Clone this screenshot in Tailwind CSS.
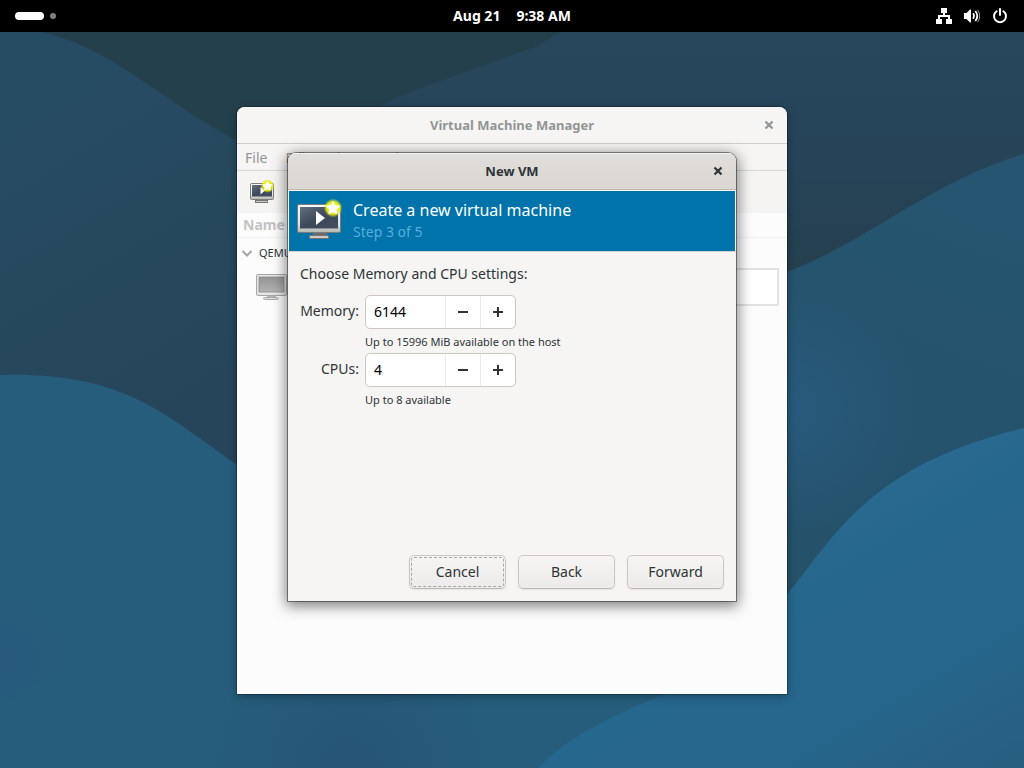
<!DOCTYPE html>
<html lang="en">
<head>
<meta charset="utf-8">
<meta name="viewport" content="width=device-width, initial-scale=1">
<title>Virtual Machine Manager</title>
<script src="https://cdn.jsdelivr.net/npm/@tailwindcss/browser@4"></script>
</head>
<body class="flex min-h-screen flex-col bg-[#26465a] font-['Noto_Sans','Open_Sans',sans-serif] text-sm text-[#2e3436]">

<svg class="absolute" width="0" height="0" aria-hidden="true">
  <defs>
    <linearGradient id="frame" x1="0" y1="0" x2="0" y2="1"><stop offset="0" stop-color="#fafafa"/><stop offset="0.7" stop-color="#e4e4e2"/><stop offset="1" stop-color="#b4b4b0"/></linearGradient>
    <linearGradient id="screen" x1="0" y1="0" x2="1" y2="1"><stop offset="0" stop-color="#63707f"/><stop offset="0.5" stop-color="#3d4959"/><stop offset="1" stop-color="#414d61"/></linearGradient>
    <linearGradient id="grayscreen" x1="0" y1="0" x2="0" y2="1"><stop offset="0" stop-color="#949494"/><stop offset="1" stop-color="#b2b2b2"/></linearGradient>
    <radialGradient id="glow"><stop offset="0" stop-color="#f6f900"/><stop offset="0.65" stop-color="#e8ee10"/><stop offset="1" stop-color="#d8e020" stop-opacity="0"/></radialGradient>
    <symbol id="vm-new" viewBox="0 0 48 42">
      <path d="M17 34h14v4H17z" fill="#6b6b69"/>
      <rect x="13.500" y="36.500" width="19" height="3" rx="0.5" fill="#c9c9c6" stroke="#777"/>
      <rect x="1.500" y="5.500" width="43" height="28" rx="1.500" fill="url(#frame)" stroke="#7c7d7a"/>
      <rect x="4" y="8" width="38" height="21.500" fill="url(#screen)"/>
      <path d="M20 12v14l9-7z" fill="#fff"/>
      <circle cx="37" cy="9" r="9.500" fill="url(#glow)"/>
      <path d="M37 2.500l2 4 4.500.7-3.200 3.100.8 4.500-4.100-2.100-4.100 2.100.8-4.500-3.200-3.100 4.500-.7z" fill="#fff" stroke="#fff" stroke-linejoin="round"/>
    </symbol>
    <symbol id="vm-new-small" viewBox="0 0 24 24">
      <rect x="5.500" y="20.500" width="12" height="2" fill="#c9c9c6" stroke="#777"/>
      <rect x="0.500" y="3.500" width="23" height="16" rx="1" fill="url(#frame)" stroke="#7c7d7a"/>
      <rect x="2" y="5" width="20" height="11.500" fill="url(#screen)"/>
      <path d="M10.500 7v7.500l4.500-4z" fill="#fff"/>
      <circle cx="17.500" cy="6" r="7" fill="url(#glow)"/>
      <path d="M17.500 1.500l1.500 2.800 3.100.5-2.200 2.200.5 3.100-2.900-1.400-2.900 1.400.5-3.100-2.200-2.200 3.100-.5z" fill="#fff" stroke="#fff" stroke-width="0.800" stroke-linejoin="round"/>
    </symbol>
  </defs>
</svg>

<header class="grid h-8 grid-cols-3 items-center bg-black px-4 text-white">
  <button type="button" aria-label="Activities" class="flex items-center gap-1.5 justify-self-start">
    <span class="-ml-px h-2 w-[29px] rounded-full bg-white"></span>
    <span class="size-1.5 rounded-full bg-[#808080]"></span>
  </button>
  <button type="button" class="flex gap-4 justify-self-center font-bold whitespace-nowrap"><span>Aug 21</span><span>9:38 AM</span></button>
  <button type="button" aria-label="System menu" class="flex items-center gap-3 justify-self-end">
    <svg class="size-4" viewBox="0 0 16 16" fill="#fff"><path d="M5.500 0h5a.5.500 0 0 1 .5.500v4a.5.500 0 0 1-.5.500H9v2h5v4h1.500a.5.500 0 0 1 .5.500v4a.5.500 0 0 1-.5.500h-5a.5.500 0 0 1-.5-.5v-4a.5.500 0 0 1 .5-.5H12V9H4v2h1.500a.5.500 0 0 1 .5.500v4a.5.500 0 0 1-.5.500h-5a.5.500 0 0 1-.5-.5v-4a.5.500 0 0 1 .5-.5H2V7h5V5H5.500a.5.500 0 0 1-.5-.5v-4a.5.500 0 0 1 .5-.5z"/></svg>
    <svg class="size-4" viewBox="0 0 16 16"><path d="M0 5h2.500L6 1.500h1v13H6L2.500 11H0z" fill="#fff"/><path d="M9 5.300q2 2.700 0 5.400M11.300 3q4 5 0 10" fill="none" stroke="#fff" stroke-width="1.800"/><path d="M13.500 1.800q4.500 6.200 0 12.400" fill="none" stroke="#aaa" stroke-width="0.900"/></svg>
    <svg class="size-4" viewBox="0 0 16 16" fill="none" stroke="#fff" stroke-width="2" stroke-linecap="round"><path d="M8 1v6M4.600 3.200a6 6 0 1 0 6.800 0"/></svg>
  </button>
</header>

<main class="relative flex-1 overflow-hidden">
  <svg class="absolute inset-0 size-full" viewBox="0 32 1024 736" preserveAspectRatio="none" aria-hidden="true">
    <defs>
      <linearGradient id="b1" x1="0" y1="0" x2="0" y2="1"><stop offset="0" stop-color="#27475d"/><stop offset="0.25" stop-color="#264357"/><stop offset="0.45" stop-color="#253f4c"/></linearGradient>
      <linearGradient id="b2" gradientUnits="userSpaceOnUse" x1="20" y1="120" x2="190" y2="400"><stop offset="0" stop-color="#264c64"/><stop offset="0.4" stop-color="#26495e"/><stop offset="1" stop-color="#26455a"/></linearGradient>
      <linearGradient id="b3" gradientUnits="userSpaceOnUse" x1="1000" y1="180" x2="850" y2="560"><stop offset="0" stop-color="#255570"/><stop offset="1" stop-color="#25516a"/></linearGradient>
      <radialGradient id="b4" gradientUnits="userSpaceOnUse" cx="790" cy="410" r="130"><stop offset="0" stop-color="#285a7c"/><stop offset="1" stop-color="#285a7c" stop-opacity="0"/></radialGradient>
      <radialGradient id="b5" gradientUnits="userSpaceOnUse" cx="350" cy="768" r="150"><stop offset="0" stop-color="#265476"/><stop offset="1" stop-color="#265476" stop-opacity="0"/></radialGradient>
      <radialGradient id="b6" gradientUnits="userSpaceOnUse" cx="0" cy="660" r="90"><stop offset="0" stop-color="#275a7d"/><stop offset="1" stop-color="#275a7d" stop-opacity="0"/></radialGradient>
      <linearGradient id="b7" gradientUnits="userSpaceOnUse" x1="840" y1="500" x2="1000" y2="768"><stop offset="0" stop-color="#2a6a90"/><stop offset="0.2" stop-color="#26678d"/><stop offset="0.6" stop-color="#26668c"/><stop offset="1" stop-color="#265f80"/></linearGradient>
    </defs>
    <path d="M0 32h1024v736H0z" fill="#25404d"/>
    <path d="M540 45C460 76 380 95 300 150V600H1024V32H560z" fill="url(#b1)"/>
    <path d="M0 32h40C110 46 160 100 237 141L300 170V600H0z" fill="url(#b2)"/>
    <path d="M1024 154C930 182 870 240 787 272L700 330V768H1024z" fill="url(#b3)"/>
    <path d="M1024 154C930 182 870 240 787 272L700 330V768H1024z" fill="url(#b4)"/>
    <path d="M0 375C120 372 160 410 237 465C400 590 600 640 787 640V768H0z" fill="#265d7c"/>
    <path d="M0 375C120 372 160 410 237 465C400 590 600 640 787 640V768H0z" fill="url(#b5)"/>
    <path d="M0 708L90 650L60 560H0z" fill="url(#b6)"/>
    <path d="M538 768C570 735 620 712 665 694C740 665 770 630 787 595C835 535 870 465 1024 428V768z" fill="url(#b7)"/>
  </svg>

  <section aria-label="Virtual Machine Manager" class="absolute top-[75px] left-1/2 flex h-[587px] w-[550px] -translate-x-1/2 flex-col overflow-hidden rounded-t-lg bg-[#fcfcfc] shadow-[0_0_0_1px_rgba(0,0,0,0.22),0_2px_8px_rgba(0,0,0,0.35)]">
    <div class="grid h-[37px] grid-cols-[1fr_auto_1fr] items-center border-b border-[#d0cfcc] bg-[#f6f5f4] px-3 text-[#929595]">
      <h1 class="col-start-2 text-[13px] font-bold">Virtual Machine Manager</h1>
      <button type="button" aria-label="Close window" class="justify-self-end"><svg class="size-3" viewBox="0 0 12 12" stroke="#929595" stroke-width="2.200"><path d="M2.500 2.500l7 7M9.500 2.500l-7 7"/></svg></button>
    </div>
    <nav class="flex h-[27px] items-center gap-[18px] border-b border-[#d9d7d4] bg-[#f6f5f4] px-2 pt-0.5 text-[#929595]">
      <button type="button">File</button><button type="button">Edit</button><button type="button">View</button><button type="button">Help</button>
    </nav>
    <div class="flex h-[42px] items-center bg-[#f5f4f2] px-[13px]">
      <button type="button" aria-label="Create a new virtual machine"><svg class="size-6" viewBox="0 0 24 24"><use href="#vm-new-small"/></svg></button>
    </div>
    <div class="flex h-[25px] items-center border-b border-[#f1f1f1] px-1.5 font-bold text-[#c2c3c3]">Name</div>
    <div class="flex h-[30px] items-center gap-1.5 px-1 text-[11px]">
      <svg class="size-3" viewBox="0 0 12 12" fill="none" stroke="#a5a7a7" stroke-width="2"><path d="M1.500 4L6 8.500 10.500 4"/></svg>
      <span>QEMU/KVM</span>
    </div>
    <div class="flex h-[38px] items-center justify-between pr-2 pl-[18px]">
      <svg class="h-7 w-8" viewBox="0 0 32 28"><path d="M12 22h9v4h-9z" fill="#b5b5b5"/><rect x="8.500" y="24.500" width="15" height="2" rx="1" fill="#ddd" stroke="#aaa"/><rect x="1.500" y="1.500" width="30" height="21" rx="1.500" fill="#e6e6e6" stroke="#a6a6a6"/><rect x="4" y="4" width="25" height="15" fill="url(#grayscreen)" stroke="#8c8c8c" stroke-width="0.800"/></svg>
      <div class="h-[38px] w-[100px] border-2 border-[#e2e2e2] bg-white"></div>
    </div>
  </section>

  <section role="dialog" aria-label="New VM" class="absolute top-[121px] left-1/2 flex h-[448px] w-[448px] -translate-x-1/2 flex-col overflow-hidden rounded-t-lg bg-[#f6f5f4] shadow-[0_0_0_1px_rgba(0,0,0,0.42),0_3px_14px_2px_rgba(0,0,0,0.5)]">
    <div class="grid h-[37px] grid-cols-[1fr_auto_1fr] items-center border-b border-[#bfb8b1] bg-linear-to-b from-[#e1dedb] to-[#dad6d2] px-3 inset-shadow-[0_1px_#f5f4f3]">
      <h2 class="col-start-2 text-[13px] font-bold">New VM</h2>
      <button type="button" aria-label="Close dialog" class="justify-self-end"><svg class="size-3" viewBox="0 0 12 12" stroke="#2e3436" stroke-width="2.200"><path d="M2.500 2.500l7 7M9.500 2.500l-7 7"/></svg></button>
    </div>
    <div class="mx-px mt-px flex h-[60px] items-center gap-2 bg-[#0073aa] pr-2 pb-[3px] pl-[7px]">
      <svg class="h-[42px] w-12 shrink-0" viewBox="0 0 48 42"><use href="#vm-new"/></svg>
      <div class="pl-px">
        <p class="text-base leading-6 text-white">Create a new virtual machine</p>
        <p class="leading-5 text-[#59aede]">Step 3 of 5</p>
      </div>
    </div>
    <form class="flex flex-1 flex-col border-t border-[#d5d1cd] px-3 pt-3 pb-3">
      <p class="leading-5">Choose Memory and CPU settings:</p>
      <div class="mt-[11px] grid grid-cols-[59px_1fr] gap-x-1.5">
        <label for="memory" class="justify-self-end leading-8">Memory:</label>
        <div class="flex h-[34px] w-[151px] overflow-hidden rounded-[5px] border border-[#cdc7c2] bg-white">
          <input id="memory" type="text" value="6144" class="w-[79px] px-2 text-black outline-none">
          <button type="button" aria-label="Less memory" class="grid w-[35px] place-items-center border-l border-[#ebebeb]"><svg class="size-3" viewBox="0 0 12 12" stroke="#2e3436" stroke-width="2"><path d="M1 6h10"/></svg></button>
          <button type="button" aria-label="More memory" class="grid w-[35px] place-items-center border-l border-[#ebebeb]"><svg class="size-3" viewBox="0 0 12 12" stroke="#2e3436" stroke-width="2"><path d="M1 6h10M6 1v10"/></svg></button>
        </div>
        <p class="col-start-2 h-6 text-[11px] leading-[26px]">Up to 15996 MiB available on the host</p>
        <label for="cpus" class="justify-self-end leading-8">CPUs:</label>
        <div class="flex h-[34px] w-[151px] overflow-hidden rounded-[5px] border border-[#cdc7c2] bg-white">
          <input id="cpus" type="text" value="4" class="w-[79px] px-2 text-black outline-none">
          <button type="button" aria-label="Fewer CPUs" class="grid w-[35px] place-items-center border-l border-[#ebebeb]"><svg class="size-3" viewBox="0 0 12 12" stroke="#2e3436" stroke-width="2"><path d="M1 6h10"/></svg></button>
          <button type="button" aria-label="More CPUs" class="grid w-[35px] place-items-center border-l border-[#ebebeb]"><svg class="size-3" viewBox="0 0 12 12" stroke="#2e3436" stroke-width="2"><path d="M1 6h10M6 1v10"/></svg></button>
        </div>
        <p class="col-start-2 h-6 text-[11px] leading-[26px]">Up to 8 available</p>
      </div>
      <div class="mt-auto flex justify-end gap-3">
        <button type="button" class="h-[34px] w-[97px] rounded-[5px] border border-[#cdc7c2] border-b-[#bfb8b1] bg-linear-to-b from-[#f6f5f4] to-[#edebe9] shadow-[0_1px_2px_rgba(0,0,0,0.07)] outline-1 -outline-offset-3 outline-dashed outline-[#a5a6a5]">Cancel</button>
        <button type="button" class="h-[34px] w-[97px] rounded-[5px] border border-[#cdc7c2] border-b-[#bfb8b1] bg-linear-to-b from-[#f6f5f4] to-[#edebe9] shadow-[0_1px_2px_rgba(0,0,0,0.07)]">Back</button>
        <button type="button" class="h-[34px] w-[97px] rounded-[5px] border border-[#cdc7c2] border-b-[#bfb8b1] bg-linear-to-b from-[#f6f5f4] to-[#edebe9] shadow-[0_1px_2px_rgba(0,0,0,0.07)]">Forward</button>
      </div>
    </form>
  </section>
</main>
</body>
</html>
